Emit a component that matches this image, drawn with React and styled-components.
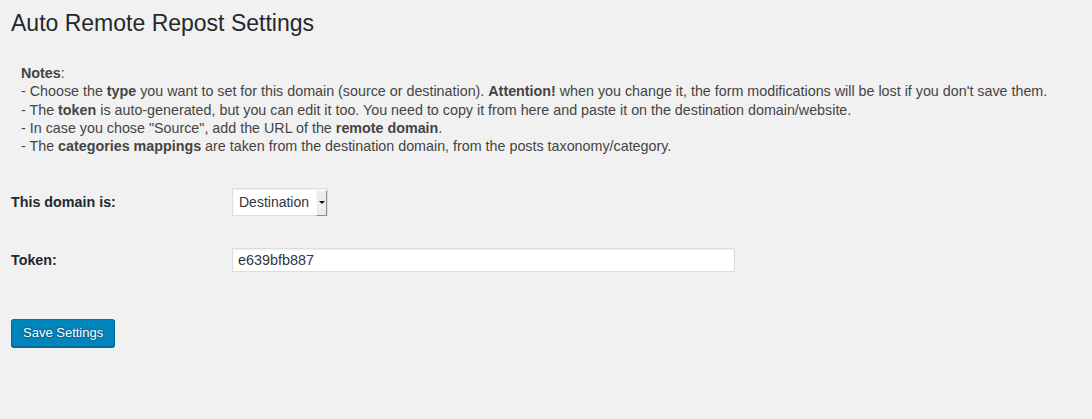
import React from "react";
import styled, { createGlobalStyle } from "styled-components";

const Global = createGlobalStyle`
  html, body {
    margin: 0;
    padding: 0;
    background: #f1f1f1;
  }
  body {
    font-family: "Liberation Sans", Arial, sans-serif;
    font-size: 13px;
    line-height: 1.4;
    color: #444;
    min-height: 419px;
  }
`;

const Wrap = styled.div`
  padding: 0 11px;
`;

const Title = styled.h1`
  margin: 0;
  padding: 9px 0 4px;
  font-size: 23px;
  font-weight: 400;
  line-height: 29.9px;
  color: #23282d;
`;

const Notes = styled.div`
  margin-top: 11px;
  padding: 10px;
  font-size: 14.3px;
  line-height: 18.3px;
  color: #444;
`;

const Line = styled.div``;

const Form = styled.form`
  margin: 7.5px 0 0;
`;

const Row = styled.div`
  display: grid;
  grid-template-columns: 221px 1fr;
`;

const Label = styled.div`
  padding: 20px 10px 20px 0;
  font-size: 14.3px;
  font-weight: 700;
  line-height: 18.2px;
  color: #23282d;
`;

const Field = styled.div`
  padding: 15px 0;
  display: flex;
  align-items: center;
`;

const SelectBox = styled.div`
  display: flex;
  align-items: stretch;
  height: 28px;
  box-sizing: border-box;
  border: 1px solid #ddd;
  background: #fff;
  box-shadow: inset 0 1px 2px rgba(0, 0, 0, 0.07);
`;

const Select = styled.select`
  appearance: none;
  -webkit-appearance: none;
  border: 0;
  outline: none;
  background: transparent;
  font-family: "Liberation Sans", Arial, sans-serif;
  font-size: 14px;
  color: #32373c;
  padding: 0 6px 0 6px;
  margin: 0;
  height: 26px;
  line-height: 26px;
`;

const ArrowButton = styled.span`
  display: flex;
  align-items: center;
  justify-content: center;
  width: 11px;
  margin: 1px 0 -1px 0;
  box-sizing: border-box;
  background: #ededed;
  border-right: 1px solid #8f8f8f;
  border-bottom: 1px solid #8f8f8f;
  border-top: 1px solid #fafafa;
  border-left: 1px solid #fafafa;
`;

const Triangle = styled.span`
  width: 0;
  height: 0;
  border-left: 3px solid transparent;
  border-right: 3px solid transparent;
  border-top: 3px solid #111;
`;

const TextInput = styled.input`
  box-sizing: border-box;
  width: 503px;
  height: 24px;
  margin: 0;
  padding: 3px 5px;
  border: 1px solid #ddd;
  background: #fff;
  box-shadow: inset 0 1px 2px rgba(0, 0, 0, 0.07);
  font-family: "Liberation Sans", Arial, sans-serif;
  font-size: 14.4px;
  color: #32373c;
  outline: none;
`;

const Submit = styled.p`
  margin: 20px 0 0;
  padding: 10px 0;
`;

const PrimaryButton = styled.button`
  height: 28px;
  box-sizing: border-box;
  padding: 0 11px 1px;
  margin: 0;
  font-family: "Liberation Sans", Arial, sans-serif;
  font-size: 13px;
  line-height: 26px;
  color: #fff;
  background: #0085ba;
  border: 1px solid;
  border-color: #0073aa #006799 #006799;
  border-radius: 3px;
  box-shadow: 0 1px 0 #006799;
  text-shadow: 0 -1px 1px #006799, 1px 0 1px #006799, 0 1px 1px #006799,
    -1px 0 1px #006799;
  cursor: pointer;
`;

export default function App() {
  return (
    <>
      <Global />
      <Wrap>
        <Title>Auto Remote Repost Settings</Title>
        <Notes>
          <Line>
            <b>Notes</b>:
          </Line>
          <Line>
            - Choose the <b>type</b> you want to set for this domain (source or
            destination). <b>Attention!</b> when you change it, the form
            modifications will be lost if you don't save them.
          </Line>
          <Line>
            - The <b>token</b> is auto-generated, but you can edit it too. You
            need to copy it from here and paste it on the destination
            domain/website.
          </Line>
          <Line>
            - In case you chose "Source", add the URL of the{" "}
            <b>remote domain</b>.
          </Line>
          <Line>
            - The <b>categories mappings</b> are taken from the destination
            domain, from the posts taxonomy/category.
          </Line>
        </Notes>
        <Form onSubmit={(e) => e.preventDefault()}>
          <Row>
            <Label>This domain is:</Label>
            <Field>
              <SelectBox>
                <Select defaultValue="destination">
                  <option value="source">Source</option>
                  <option value="destination">Destination</option>
                </Select>
                <ArrowButton>
                  <Triangle />
                </ArrowButton>
              </SelectBox>
            </Field>
          </Row>
          <Row>
            <Label>Token:</Label>
            <Field>
              <TextInput type="text" defaultValue="e639bfb887" />
            </Field>
          </Row>
          <Submit>
            <PrimaryButton type="submit">Save Settings</PrimaryButton>
          </Submit>
        </Form>
      </Wrap>
    </>
  );
}
